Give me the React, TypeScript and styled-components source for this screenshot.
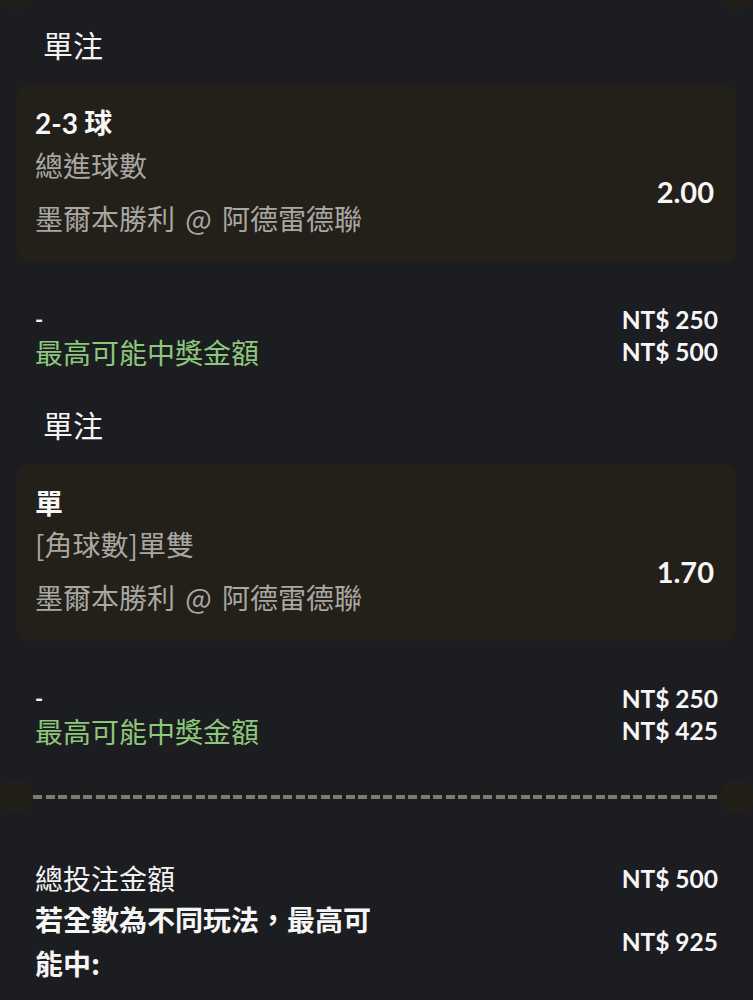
import React from "react";
import styled, { createGlobalStyle } from "styled-components";

const Global = createGlobalStyle`
  html, body { margin: 0; padding: 0; background: #1c1d20; }
  body { font-family: "Noto Sans CJK TC", "Noto Sans", sans-serif; color: #f2f2f2; }
  * { box-sizing: border-box; }
`;

const Page = styled.div`
  width: 753px;
  min-height: 1000px;
  background: #1c1d20;
  position: relative;
  overflow: hidden;
  padding: 23px 17px 0;
`;

const TopNotch = styled.div<{ $side: "left" | "right" }>`
  position: absolute;
  top: -24px;
  ${(p) => (p.$side === "left" ? "left: -1px;" : "right: -1px;")}
  width: 34px;
  height: 34px;
  border-radius: 50%;
  background: #221f18;
`;

const Section = styled.section`
  display: flex;
  flex-direction: column;
  & + & { margin-top: 35px; }
`;

const Heading = styled.h2`
  margin: 0 0 19px;
  padding-left: 26px;
  font-size: 30px;
  font-weight: 400;
  line-height: 42px;
  color: #f4f4f4;
`;

const Card = styled.div`
  display: flex;
  justify-content: space-between;
  align-items: center;
  background: #231f19;
  border-radius: 12px;
  padding: 18px 22px 24px 18px;
`;

const Info = styled.div`
  display: flex;
  flex-direction: column;
`;

const Pick = styled.div`
  font-size: 28px;
  font-weight: 700;
  line-height: 40px;
  color: #f6f6f6;
`;

const Num = styled.span`
  font-family: "Lato", "Noto Sans CJK TC", sans-serif;
  font-weight: 700;
`;

const Sub = styled.div<{ $gap?: number }>`
  font-size: 28px;
  line-height: 40px;
  color: #a9a7a2;
  word-spacing: 4px;
  margin-top: ${(p) => p.$gap ?? 0}px;
`;

const Odds = styled.div`
  font-family: "Lato", sans-serif;
  font-weight: 700;
  font-size: 29px;
  color: #f6f6f6;
  padding-top: 43px;
`;

const Rows = styled.div`
  display: flex;
  flex-direction: column;
  padding: 42px 18px 0;
`;

const Row = styled.div`
  display: flex;
  justify-content: space-between;
  align-items: center;
  line-height: 32px;
`;

const Label = styled.span<{ $tone?: "green" | "white" }>`
  font-size: 28px;
  color: ${(p) => (p.$tone === "green" ? "#8dc77c" : "#f2f2f2")};
`;

const Dash = styled.span`
  font-family: "Lato", sans-serif;
  font-weight: 700;
  font-size: 22px;
  color: #f2f2f2;
`;

const Amount = styled.span`
  font-family: "Lato", sans-serif;
  font-weight: 700;
  font-size: 24.5px;
  color: #f6f6f6;
`;

const Divider = styled.div`
  position: relative;
  height: 34px;
  margin: 33px -17px 0;
  display: flex;
  align-items: center;
  padding: 0 33px;
`;

const Notch = styled.div<{ $side: "left" | "right" }>`
  position: absolute;
  top: 0;
  ${(p) => (p.$side === "left" ? "left: -1px;" : "right: -1px;")}
  width: 34px;
  height: 34px;
  border-radius: 50%;
  background: #221f18;
`;

const Dashes = styled.div`
  flex: 1;
  height: 4px;
  background-image: repeating-linear-gradient(
    to right,
    #7e7a71 0,
    #7e7a71 9px,
    transparent 9px,
    transparent 12.5px
  );
`;

const Totals = styled.div`
  display: flex;
  flex-direction: column;
  padding: 46px 18px 0;
  gap: 1px;
`;

const TotalRow = styled.div`
  display: flex;
  justify-content: space-between;
  align-items: center;
`;

const TotalLabel = styled.span`
  font-size: 28px;
  line-height: 36px;
  color: #f2f2f2;
`;

const Strong = styled.span`
  font-size: 28px;
  font-weight: 700;
  line-height: 44px;
  max-width: 345px;
  color: #f6f6f6;
`;

type Bet = { pick: React.ReactNode; market: string; match: string; odds: string; stake: string; win: string };

const bets: Bet[] = [
  { pick: <><Num>2-3</Num> 球</>, market: "總進球數", match: "墨爾本勝利 @ 阿德雷德聯", odds: "2.00", stake: "NT$ 250", win: "NT$ 500" },
  { pick: "單", market: "[角球數]單雙", match: "墨爾本勝利 @ 阿德雷德聯", odds: "1.70", stake: "NT$ 250", win: "NT$ 425" },
];

export default function App() {
  return (
    <>
      <Global />
      <Page>
        <TopNotch $side="left" />
        <TopNotch $side="right" />
        {bets.map((b, i) => (
          <Section key={i}>
            <Heading>單注</Heading>
            <Card>
              <Info>
                <Pick>{b.pick}</Pick>
                <Sub $gap={2}>{b.market}</Sub>
                <Sub $gap={13}>{b.match}</Sub>
              </Info>
              <Odds>{b.odds}</Odds>
            </Card>
            <Rows>
              <Row>
                <Dash>-</Dash>
                <Amount>{b.stake}</Amount>
              </Row>
              <Row>
                <Label $tone="green">最高可能中獎金額</Label>
                <Amount>{b.win}</Amount>
              </Row>
            </Rows>
          </Section>
        ))}
        <Divider>
          <Notch $side="left" />
          <Dashes />
          <Notch $side="right" />
        </Divider>
        <Totals>
          <TotalRow>
            <TotalLabel>總投注金額</TotalLabel>
            <Amount>NT$ 500</Amount>
          </TotalRow>
          <TotalRow>
            <Strong>若全數為不同玩法，最高可能中:</Strong>
            <Amount>NT$ 925</Amount>
          </TotalRow>
        </Totals>
      </Page>
    </>
  );
}
